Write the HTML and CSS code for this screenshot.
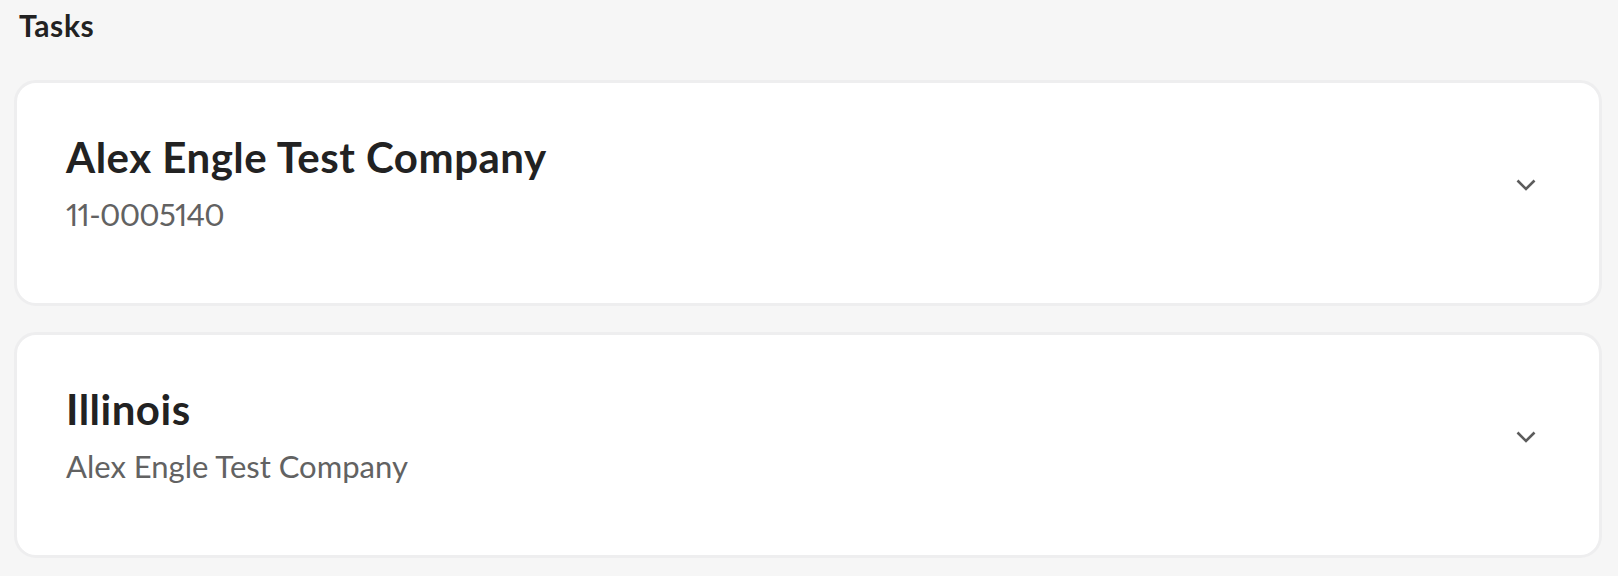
FILE: index.html
```html
<!DOCTYPE html>
<html lang="en">
<head>
<meta charset="utf-8">
<title>Tasks</title>
<link rel="stylesheet" href="styles.css">
</head>
<body>
<main class="page">
  <h1 class="page-title">Tasks</h1>
  <ul class="task-list">
    <li class="task-card">
      <div class="task-text">
        <h2 class="task-name">Alex Engle Test Company</h2>
        <p class="task-sub task-sub-code">11-0005140</p>
      </div>
      <button class="task-toggle" type="button" aria-label="Expand">
        <svg width="22" height="14" viewBox="0 0 22 14" aria-hidden="true"><path d="M2.5 2.5 L11 11 L19.5 2.5" fill="none" stroke="#5c5c5c" stroke-width="2.6"/></svg>
      </button>
    </li>
    <li class="task-card">
      <div class="task-text">
        <h2 class="task-name">Illinois</h2>
        <p class="task-sub">Alex Engle Test Company</p>
      </div>
      <button class="task-toggle" type="button" aria-label="Expand">
        <svg width="22" height="14" viewBox="0 0 22 14" aria-hidden="true"><path d="M2.5 2.5 L11 11 L19.5 2.5" fill="none" stroke="#5c5c5c" stroke-width="2.6"/></svg>
      </button>
    </li>
  </ul>
</main>
</body>
</html>
```

FILE: styles.css
```css
html, body {
  margin: 0;
  padding: 0;
  background: #f6f6f6;
}

body {
  font-family: Lato, "Open Sans", "Noto Sans", sans-serif;
  color: #222222;
}

.page {
  padding: 7px 16px 0 14px;
}

.page-title {
  margin: 0 0 37px 5px;
  font-size: 30px;
  line-height: 36px;
  font-weight: 700;
  letter-spacing: 0.6px;
  color: #222222;
}

.task-list {
  list-style: none;
  margin: 0;
  padding: 0;
  display: flex;
  flex-direction: column;
  gap: 26px;
}

.task-card {
  display: flex;
  align-items: center;
  background: #ffffff;
  border: 3px solid #eeeeef;
  border-radius: 22px;
  padding: 48px 62px 71px 49px;
  box-sizing: border-box;
  height: 226px;
}

.task-text {
  flex: 1;
  min-width: 0;
}

.task-name {
  margin: 0;
  font-size: 42px;
  line-height: 50px;
  font-weight: 700;
  letter-spacing: 0.5px;
  color: #222222;
}

.task-sub {
  margin: 14px 0 0;
  font-size: 31px;
  line-height: 36px;
  font-weight: 400;
  color: #626262;
}

.task-sub-code {
  font-variant-numeric: proportional-nums;
  letter-spacing: -0.7px;
}

.task-toggle {
  display: flex;
  align-items: center;
  justify-content: center;
  width: 22px;
  height: 14px;
  padding: 0;
  margin: 0;
  border: 0;
  background: transparent;
  position: relative;
  top: 3px;
}
```
